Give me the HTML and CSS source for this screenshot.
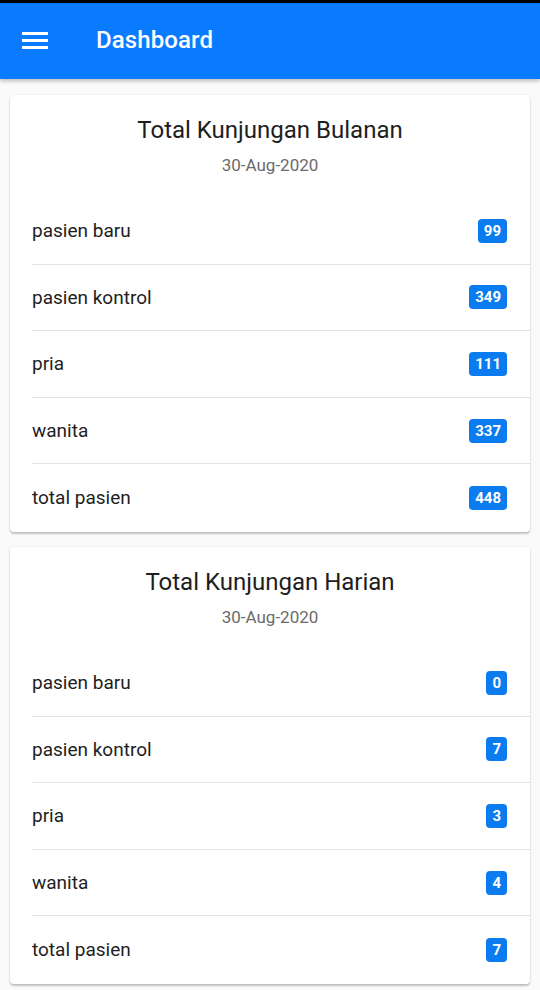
FILE: index.html
```html
<!DOCTYPE html>
<html>
<head>
<meta charset="utf-8">
<link rel="stylesheet" href="styles.css">
</head>
<body>
<div class="topstrip"></div>
<header class="appbar">
  <svg class="menu" width="26" height="20" viewBox="0 0 26 20"><rect x="0" y="2" width="26" height="3" fill="#fff"/><rect x="0" y="9" width="26" height="3" fill="#fff"/><rect x="0" y="16" width="26" height="3" fill="#fff"/></svg>
  <span class="apptitle">Dashboard</span>
</header>
<main class="content">
  <section class="card">
    <h2 class="card-title">Total Kunjungan Bulanan</h2>
    <div class="card-date">30-Aug-2020</div>
    <ul class="list">
      <li class="row"><span>pasien baru</span><span class="badge">99</span></li>
      <li class="row"><span>pasien kontrol</span><span class="badge">349</span></li>
      <li class="row"><span>pria</span><span class="badge">111</span></li>
      <li class="row"><span>wanita</span><span class="badge">337</span></li>
      <li class="row"><span>total pasien</span><span class="badge">448</span></li>
    </ul>
  </section>
  <section class="card">
    <h2 class="card-title">Total Kunjungan Harian</h2>
    <div class="card-date">30-Aug-2020</div>
    <ul class="list">
      <li class="row"><span>pasien baru</span><span class="badge">0</span></li>
      <li class="row"><span>pasien kontrol</span><span class="badge">7</span></li>
      <li class="row"><span>pria</span><span class="badge">3</span></li>
      <li class="row"><span>wanita</span><span class="badge">4</span></li>
      <li class="row"><span>total pasien</span><span class="badge">7</span></li>
    </ul>
  </section>
</main>
</body>
</html>
```
FILE: styles.css
```css
* { box-sizing: border-box; }
html, body { margin: 0; padding: 0; }
body {
  width: 540px;
  height: 990px;
  overflow: hidden;
  background: #fafafa;
  font-family: Roboto, "Liberation Sans", sans-serif;
  color: #212121;
}
.topstrip { height: 3px; background: #000; }
.appbar {
  height: 76px;
  background: #0a7bff;
  display: flex;
  align-items: center;
  padding-left: 22px;
  box-shadow: 0 2px 4px rgba(0,0,0,0.25);
  position: relative;
}
.menu { display: block; margin-top: -2px; }
.apptitle {
  margin-left: 48px;
  margin-top: -2px;
  color: #fff;
  font-size: 24px;
  font-weight: 500;
  letter-spacing: 0.1px;
}
.content {
  padding: 16px 10px 0 10px;
  display: flex;
  flex-direction: column;
  gap: 15px;
}
.card {
  background: #fff;
  border-radius: 4px;
  box-shadow: 0 2px 2px rgba(0,0,0,0.22), 0 0 2px rgba(0,0,0,0.1);
  padding-top: 20px;
  padding-bottom: 1px;
  overflow: hidden;
}
.card-title {
  margin: 0;
  text-align: center;
  font-size: 24px;
  font-weight: 400;
  line-height: 30px;
  color: #1e1e1e;
}
.card-date {
  margin-top: 10px;
  text-align: center;
  font-size: 17px;
  line-height: 20px;
  color: #6b6b6b;
}
.list {
  list-style: none;
  margin: 23px 0 0 22px;
  padding: 0;
}
.row {
  height: 66.6px;
  display: flex;
  align-items: center;
  justify-content: space-between;
  padding-right: 23px;
  font-size: 19px;
  border-bottom: 1px solid #e3e3e3;
  color: #1e1e1e;
}
.row:last-child { border-bottom: none; }
.badge {
  background: #0b7bf0;
  color: #fff;
  font-size: 15px;
  font-weight: 700;
  min-width: 20px;
  height: 24px;
  line-height: 24px;
  padding: 0 6px;
  border-radius: 4px;
  text-align: center;
}
```
